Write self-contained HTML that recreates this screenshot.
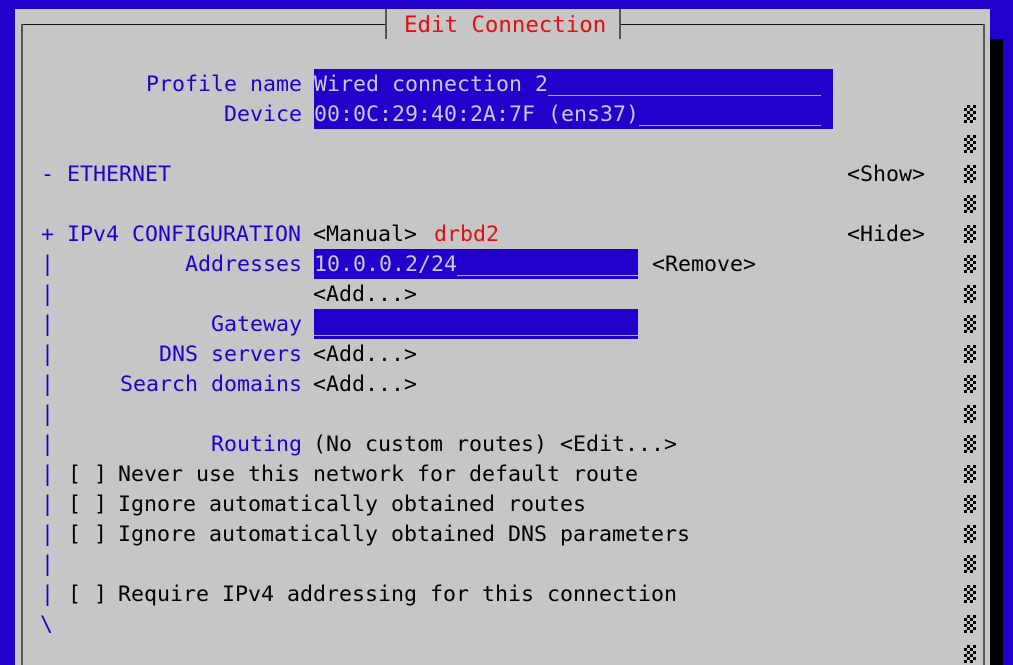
<!DOCTYPE html>
<html><head><meta charset="utf-8"><style>
html,body{margin:0;padding:0;overflow:hidden;width:1013px;height:665px}
body{background:#2200cc;position:relative;font-family:"DejaVu Sans Mono","Liberation Mono",monospace;font-size:21.6px}
.panel{position:absolute;left:15px;top:9px;width:975px;height:656px;background:#c6c6c6}
.shadow{position:absolute;left:990px;top:39px;width:13px;height:626px;background:#000}
.t{position:absolute;height:30px;line-height:32px;white-space:pre;color:#000}
.lab{position:absolute;right:711px;height:30px;line-height:32px;white-space:pre;color:#2200cc}
.b{color:#2200cc}
.r{color:#e01010}
.f{position:absolute;left:314px;height:30px;line-height:32px;white-space:pre;background:#2200cc;color:#c8c8d8;overflow:hidden}
.ck{position:absolute;left:964px;width:12px;height:18px;background:repeating-conic-gradient(#000 0 25%,#c6c6c6 0 50%) 0 0/6px 6px}
.bar{position:absolute;left:41px;height:30px;line-height:32px;color:#2200cc}
</style></head><body>
<div class="panel"></div>
<div class="shadow"></div>
<div style="position:absolute;left:21px;top:24px;width:365px;height:1px;background:#111"></div>
<div style="position:absolute;left:620px;top:24px;width:364px;height:1px;background:#111"></div>
<div style="position:absolute;left:21px;top:24px;width:2px;height:650px;background:#555"></div>
<div style="position:absolute;left:983px;top:24px;width:2px;height:650px;background:#555"></div>
<div style="position:absolute;left:385px;top:9px;width:2px;height:30px;background:#555"></div>
<div style="position:absolute;left:619px;top:9px;width:2px;height:30px;background:#555"></div>
<div class="t r" style="left:404px;top:9px;font-size:22.4px">Edit Connection</div>

<div class="lab" style="top:69px">Profile name</div>
<div class="f" style="top:69px;width:519px">Wired connection 2_____________________</div>
<div class="lab" style="top:99px">Device</div>
<div class="f" style="top:99px;width:519px">00:0C:29:40:2A:7F (ens37)______________</div>

<div class="t b" style="left:41px;top:159px">- ETHERNET</div>
<div class="t" style="left:847px;top:159px">&lt;Show&gt;</div>
<div class="t b" style="left:41px;top:219px">+ IPv4 CONFIGURATION</div>
<div class="t" style="left:313px;top:219px">&lt;Manual&gt;</div>
<div class="t r" style="left:434px;top:219px">drbd2</div>
<div class="t" style="left:847px;top:219px">&lt;Hide&gt;</div>

<div class="bar" style="top:249px">|</div>
<div class="lab" style="top:249px">Addresses</div>
<div class="f" style="top:249px;width:324px">10.0.0.2/24______________</div>
<div class="t" style="left:652px;top:249px">&lt;Remove&gt;</div>
<div class="bar" style="top:279px">|</div>
<div class="t" style="left:313px;top:279px">&lt;Add...&gt;</div>
<div class="bar" style="top:309px">|</div>
<div class="lab" style="top:309px">Gateway</div>
<div class="f" style="top:309px;width:324px">_________________________</div>
<div class="bar" style="top:339px">|</div>
<div class="lab" style="top:339px">DNS servers</div>
<div class="t" style="left:313px;top:339px">&lt;Add...&gt;</div>
<div class="bar" style="top:369px">|</div>
<div class="lab" style="top:369px">Search domains</div>
<div class="t" style="left:313px;top:369px">&lt;Add...&gt;</div>
<div class="bar" style="top:399px">|</div>
<div class="bar" style="top:429px">|</div>
<div class="lab" style="top:429px">Routing</div>
<div class="t" style="left:313px;top:429px">(No custom routes) &lt;Edit...&gt;</div>
<div class="bar" style="top:459px">|</div>
<div class="t" style="left:68px;top:459px">[ ]</div>
<div class="t" style="left:118px;top:459px">Never use this network for default route</div>
<div class="bar" style="top:489px">|</div>
<div class="t" style="left:68px;top:489px">[ ]</div>
<div class="t" style="left:118px;top:489px">Ignore automatically obtained routes</div>
<div class="bar" style="top:519px">|</div>
<div class="t" style="left:68px;top:519px">[ ]</div>
<div class="t" style="left:118px;top:519px">Ignore automatically obtained DNS parameters</div>
<div class="bar" style="top:549px">|</div>
<div class="bar" style="top:579px">|</div>
<div class="t" style="left:68px;top:579px">[ ]</div>
<div class="t" style="left:118px;top:579px">Require IPv4 addressing for this connection</div>
<div class="t b" style="left:40px;top:609px">\</div>

<div class="ck" style="top:105px"></div><div class="ck" style="top:135px"></div><div class="ck" style="top:165px"></div><div class="ck" style="top:195px"></div><div class="ck" style="top:225px"></div><div class="ck" style="top:255px"></div><div class="ck" style="top:285px"></div><div class="ck" style="top:315px"></div><div class="ck" style="top:345px"></div><div class="ck" style="top:375px"></div><div class="ck" style="top:405px"></div><div class="ck" style="top:435px"></div><div class="ck" style="top:465px"></div><div class="ck" style="top:495px"></div><div class="ck" style="top:525px"></div><div class="ck" style="top:555px"></div><div class="ck" style="top:585px"></div><div class="ck" style="top:615px"></div><div class="ck" style="top:645px"></div>
</body></html>
